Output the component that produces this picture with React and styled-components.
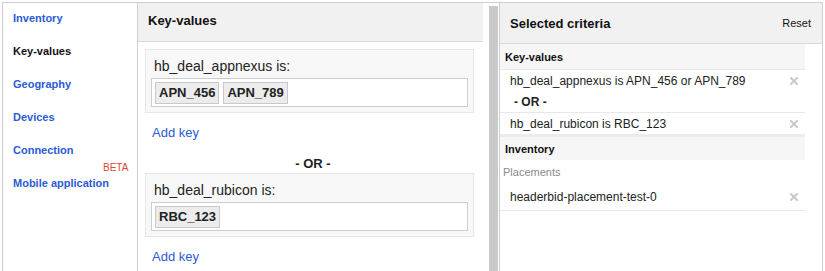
import React from 'react';
import styled, { createGlobalStyle } from 'styled-components';

const GlobalStyle = createGlobalStyle`
  html, body {
    margin: 0;
    padding: 0;
    overflow: hidden;
    background: #fff;
  }
  body {
    font-family: "Liberation Sans", Arial, Helvetica, sans-serif;
    color: #222;
  }
`;

const Frame = styled.div`
  display: flex;
  margin: 2px 0 0 2px;
  width: 821px;
  height: 269px;
  box-sizing: border-box;
  border: 1px solid #cfcfcf;
  border-bottom: none;
`;

const Nav = styled.nav`
  width: 135px;
  flex: none;
  box-sizing: border-box;
  border-right: 1px solid #cfcfcf;
  padding: 8px 0 0 10px;
  display: flex;
  flex-direction: column;
  gap: 19px;
`;

const NavItem = styled.a`
  position: relative;
  font-size: 11px;
  font-weight: bold;
  line-height: 14px;
  color: ${p => (p.$active ? '#111' : '#2b5bd6')};
  text-decoration: none;
`;

const Beta = styled.span`
  position: absolute;
  left: 90px;
  top: -13px;
  font-size: 10px;
  font-weight: normal;
  line-height: 10px;
  color: #e0453c;
`;

const Middle = styled.section`
  width: 345px;
  flex: none;
  display: flex;
  flex-direction: column;
`;

const PanelHeader = styled.header`
  display: flex;
  align-items: center;
  justify-content: space-between;
  box-sizing: border-box;
  height: ${p => p.$h}px;
  padding: 0 11px 0 10px;
  background: #f1f1f1;
  border-bottom: 1px solid #d9d9d9;
`;

const HeaderTitle = styled.h2`
  margin: 0;
  font-size: 13px;
  font-weight: bold;
  color: #111;
  padding-bottom: ${p => p.$lift || 0}px;
`;

const ResetLink = styled.span`
  font-size: 11px;
  color: #111;
`;

const MiddleBody = styled.div`
  padding: 7px 9px 0 7px;
  display: flex;
  flex-direction: column;
`;

const KeyCard = styled.div`
  background: #f8f8f8;
  border: 1px solid #e6e6e6;
  padding: 8px 5px 5px;
`;

const KeyLabel = styled.div`
  font-size: 14px;
  line-height: 16px;
  padding-left: 3px;
  margin-bottom: 4px;
`;

const ValueBox = styled.div`
  display: flex;
  gap: 4px;
  background: #fff;
  border: 1px solid #cdcdcd;
  padding: 3px 3px 2px;
`;

const Chip = styled.span`
  font-size: 13px;
  font-weight: bold;
  line-height: 20px;
  padding: 0 3px;
  background: #ececec;
  border: 1px solid #c9c9c9;
  color: #222;
`;

const AddKey = styled.a`
  font-size: 13px;
  line-height: 16px;
  color: #2b5bd6;
  margin: 12px 0 0 7px;
`;

const OrLine = styled.div`
  text-align: center;
  font-size: 13px;
  font-weight: bold;
  line-height: 16px;
  margin: 15px 0 1px;
  padding-left: 7px;
  color: #222;
`;

const Splitter = styled.div`
  width: 9px;
  flex: none;
  margin: 3px 1px 0 6px;
  background: #c9c9c9;
`;

const Right = styled.section`
  flex: 1;
  border-left: 1px solid #cfcfcf;
  display: flex;
  flex-direction: column;
`;

const Criteria = styled.div`
  margin-right: 17px;
  display: flex;
  flex-direction: column;
`;

const SectionHead = styled.div`
  box-sizing: border-box;
  height: ${p => p.$h}px;
  display: flex;
  align-items: center;
  padding-left: 5px;
  font-size: 11px;
  font-weight: bold;
  color: #111;
  background: #f6f6f6;
  border-top: ${p => (p.$strip ? '3px solid #ebebeb' : 'none')};
  border-bottom: ${p => (p.$line ? '1px solid #e8e8e8' : 'none')};
`;

const CriteriaRow = styled.div`
  box-sizing: border-box;
  display: flex;
  align-items: center;
  justify-content: space-between;
  height: ${p => p.$h}px;
  padding: 0 7px 0 10px;
  font-size: 12px;
  color: #222;
  border-bottom: ${p => (p.$line ? '1px solid #e8e8e8' : 'none')};
`;

const OrRow = styled(CriteriaRow)`
  font-weight: bold;
  padding-left: 14px;
`;

const SubLabel = styled.div`
  height: 24px;
  display: flex;
  align-items: center;
  padding-left: 3px;
  font-size: 11px;
  color: #8a8a8a;
`;

function RemoveIcon() {
  return (
    <svg width="8" height="8" viewBox="0 0 8 8" aria-hidden="true">
      <path d="M1 1 L7 7 M7 1 L1 7" stroke="#c9c9c9" strokeWidth="2" strokeLinecap="square" />
    </svg>
  );
}

const navItems = ['Inventory', 'Key-values', 'Geography', 'Devices', 'Connection', 'Mobile application'];

const keys = [
  { name: 'hb_deal_appnexus', values: ['APN_456', 'APN_789'] },
  { name: 'hb_deal_rubicon', values: ['RBC_123'] },
];

export default function App() {
  return (
    <>
      <GlobalStyle />
      <Frame>
        <Nav>
          {navItems.map(item => (
            <NavItem key={item} $active={item === 'Key-values'}>
              {item}
              {item === 'Mobile application' && <Beta>BETA</Beta>}
            </NavItem>
          ))}
        </Nav>

        <Middle>
          <PanelHeader $h={39}>
            <HeaderTitle $lift={4}>Key-values</HeaderTitle>
          </PanelHeader>
          <MiddleBody>
            {keys.map((k, i) => (
              <React.Fragment key={k.name}>
                {i > 0 && <OrLine>- OR -</OrLine>}
                <KeyCard>
                  <KeyLabel>{k.name} is:</KeyLabel>
                  <ValueBox>
                    {k.values.map(v => (
                      <Chip key={v}>{v}</Chip>
                    ))}
                  </ValueBox>
                </KeyCard>
                <AddKey>Add key</AddKey>
              </React.Fragment>
            ))}
          </MiddleBody>
        </Middle>

        <Splitter />

        <Right>
          <PanelHeader $h={41}>
            <HeaderTitle>Selected criteria</HeaderTitle>
            <ResetLink>Reset</ResetLink>
          </PanelHeader>
          <Criteria>
            <SectionHead $h={26} $line>Key-values</SectionHead>
            <CriteriaRow $h={22}>
              hb_deal_appnexus is APN_456 or APN_789
              <RemoveIcon />
            </CriteriaRow>
            <OrRow $h={21} $line>- OR -</OrRow>
            <CriteriaRow $h={21}>
              hb_deal_rubicon is RBC_123
              <RemoveIcon />
            </CriteriaRow>
            <SectionHead $h={26} $strip>Inventory</SectionHead>
            <SubLabel>Placements</SubLabel>
            <CriteriaRow $h={27} $line>
              headerbid-placement-test-0
              <RemoveIcon />
            </CriteriaRow>
          </Criteria>
        </Right>
      </Frame>
    </>
  );
}
